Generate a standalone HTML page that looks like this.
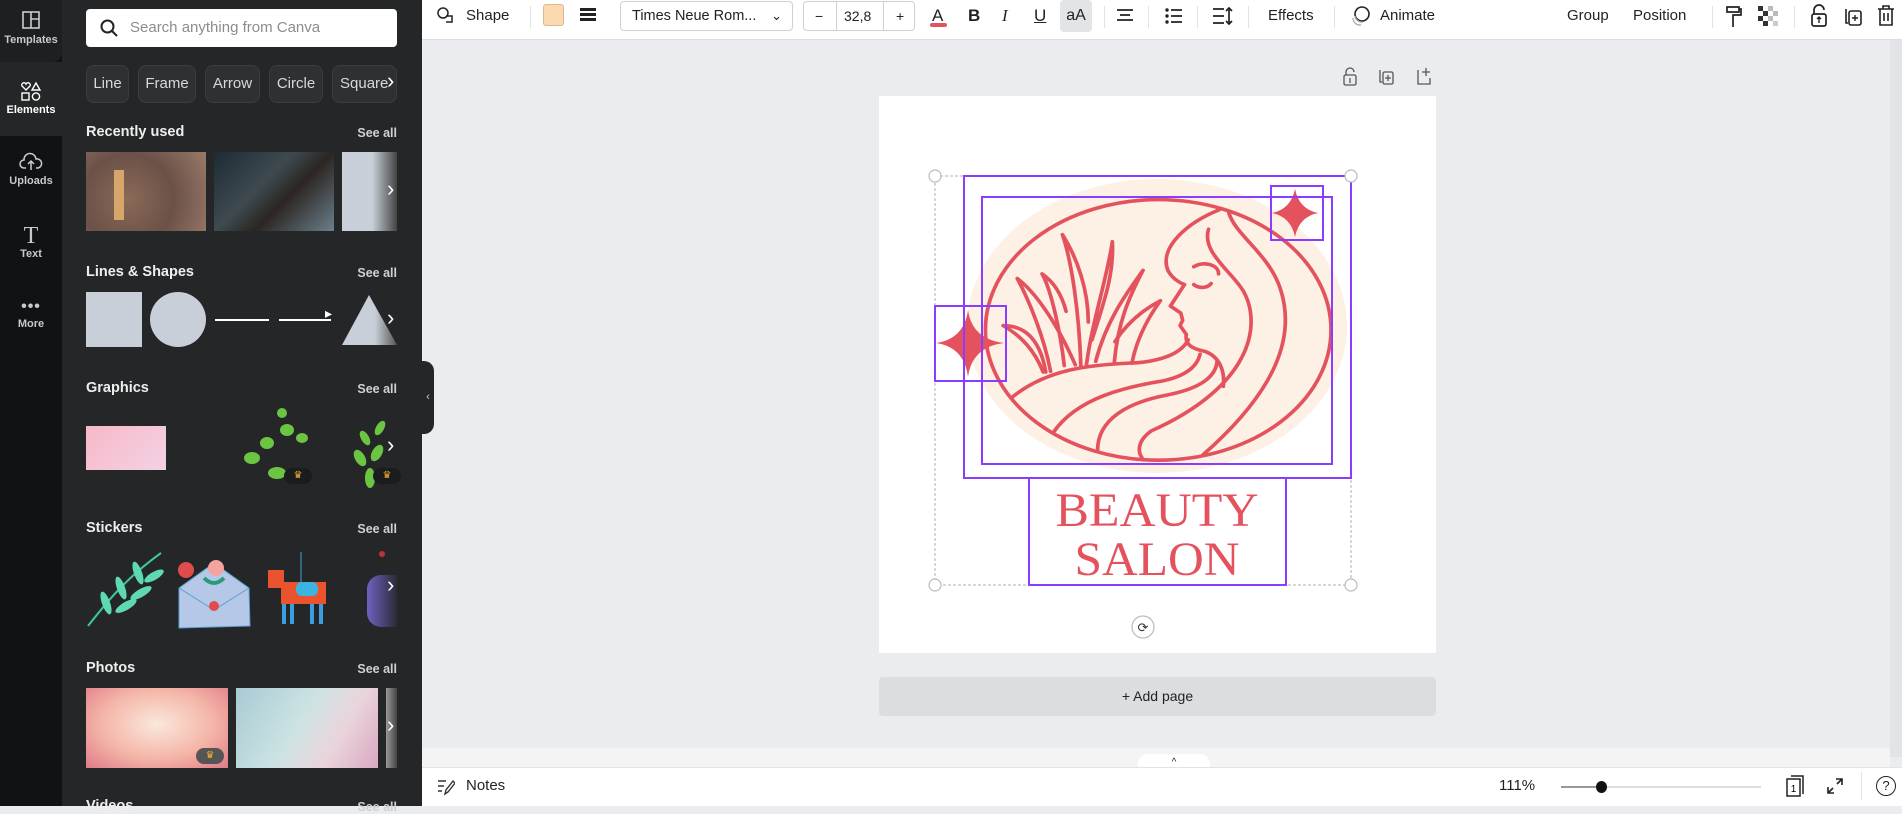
<!DOCTYPE html>
<html><head><meta charset="utf-8"><style>
*{margin:0;padding:0;box-sizing:border-box}
body{width:1902px;height:806px;overflow:hidden;background:#ebecf0;font-family:"Liberation Sans",sans-serif;position:relative}
.a{position:absolute}
.rail{left:0;top:0;width:62px;height:806px;background:#111213}
.ri{position:absolute;left:0;width:62px;text-align:center;color:#c8c9cc;font-size:11px;font-weight:bold}
.panel{left:62px;top:0;width:360px;height:806px;background:#252627}
.h{position:absolute;color:#eee;font-size:14.5px;font-weight:bold}
.sa{position:absolute;right:25px;color:#cfd0d2;font-size:12.5px;font-weight:bold}
.chip{position:absolute;top:65px;height:38px;border:1px solid #3b3c3e;background:#2f3032;border-radius:8px;color:#d8d9db;font-size:15px;line-height:36px;text-align:center}
.arr{position:absolute;color:#fff;font-size:22px;font-weight:300}
.tb{left:422px;top:0;width:1480px;height:40px;background:#fff;border-bottom:1px solid #dcdde0}
.t{position:absolute;top:0;line-height:31px;font-size:15px;color:#222}
.sep{position:absolute;top:6px;width:1px;height:22px;background:#e2e3e5}
</style></head><body>
<div class="a rail">
 <div class="ri" style="top:0;height:62px;background:#1e1f21;border-radius:0 0 10px 0;padding-top:10px"><svg width="20" height="20" viewBox="0 0 20 20"><rect x="2" y="2" width="16" height="16" fill="none" stroke="#ccc" stroke-width="1.6"/><path d="M10 2v16M10 9h8" stroke="#ccc" stroke-width="1.6"/></svg><div style="margin-top:1px">Templates</div></div>
 <div class="ri" style="top:62px;height:74px;background:#252627;padding-top:19px;color:#fff"><svg width="22" height="20" viewBox="0 0 22 20"><path d="M6 9L2 5a2 2 0 0 1 4-2 2 2 0 0 1 4 2z M12 9l4-7 4 7z" fill="none" stroke="#fff" stroke-width="1.4"/><rect x="2" y="12" width="7" height="7" fill="none" stroke="#fff" stroke-width="1.4"/><circle cx="16" cy="15.5" r="3.6" fill="none" stroke="#fff" stroke-width="1.4"/></svg><div>Elements</div></div>
 <div class="ri" style="top:152px"><svg width="24" height="20" viewBox="0 0 24 20"><path d="M7 16H5a4 4 0 0 1 0-8 6 6 0 0 1 12-1 4 4 0 0 1 2 9h-2M12 18V9M9 12l3-3 3 3" fill="none" stroke="#ccc" stroke-width="1.5"/></svg><div>Uploads</div></div>
 <div class="ri" style="top:224px"><div style="font-family:'Liberation Serif',serif;font-size:24px;font-weight:normal;line-height:24px">T</div><div>Text</div></div>
 <div class="ri" style="top:300px"><div style="font-size:16px;line-height:14px;letter-spacing:1px">•••</div><div style="margin-top:4px">More</div></div>
</div>
<div class="a panel">
 <div class="a" style="left:24px;top:9px;width:311px;height:38px;background:#fff;border-radius:4px;color:#8a8c90;font-size:15px;line-height:38px;padding-left:44px">Search anything from Canva
  <svg class="a" style="left:14px;top:10px" width="18" height="18" viewBox="0 0 18 18"><circle cx="7.5" cy="7.5" r="6" fill="none" stroke="#222" stroke-width="2"/><path d="M12 12l5 5" stroke="#222" stroke-width="2"/></svg></div>
 <div class="chip" style="left:24px;width:43px">Line</div>
 <div class="chip" style="left:76px;width:58px">Frame</div>
 <div class="chip" style="left:143px;width:55px">Arrow</div>
 <div class="chip" style="left:207px;width:54px">Circle</div>
 <div class="chip" style="left:270px;width:65px;text-align:left;padding-left:7px;overflow:hidden">Square</div>
 <div class="arr" style="left:325px;top:68px">›</div>

 <div class="h" style="left:24px;top:124px">Recently used</div><div class="sa" style="top:126px">See all</div>
 <div class="a" style="left:24px;top:152px;width:120px;height:79px;background:radial-gradient(circle at 35% 60%,#8a6a58,#6b5148 50%,#9a7a6a);"></div>
 <div class="a" style="left:52px;top:170px;width:10px;height:50px;background:#d7a66a"></div>
 <div class="a" style="left:152px;top:152px;width:120px;height:79px;background:linear-gradient(135deg,#1d2b33,#3e4a50 40%,#2a2622 60%,#6c7f8c)"></div>
 <div class="a" style="left:280px;top:152px;width:55px;height:79px;background:linear-gradient(90deg,#c8cfd8 55%,#444)"></div>
 <div class="arr" style="left:325px;top:176px">›</div>

 <div class="h" style="left:24px;top:264px">Lines &amp; Shapes</div><div class="sa" style="top:266px">See all</div>
 <div class="a" style="left:24px;top:292px;width:56px;height:55px;background:#c8cfd8"></div>
 <div class="a" style="left:88px;top:292px;width:56px;height:55px;background:#c8cfd8;border-radius:50%"></div>
 <div class="a" style="left:153px;top:319px;width:54px;height:2px;background:#fff"></div>
 <div class="a" style="left:217px;top:319px;width:52px;height:2px;background:#fff"></div>
 <div class="arr" style="left:263px;top:305px;font-size:14px">▸</div>
 <svg class="a" style="left:280px;top:295px" width="55" height="50"><defs><linearGradient id="tg"><stop offset=".6" stop-color="#c8cfd8"/><stop offset="1" stop-color="#555"/></linearGradient></defs><path d="M27 0L55 50H0z" fill="url(#tg)"/></svg>
 <div class="arr" style="left:325px;top:305px">›</div>

 <div class="h" style="left:24px;top:380px">Graphics</div><div class="sa" style="top:382px">See all</div>
 <div class="a" style="left:24px;top:426px;width:80px;height:44px;background:linear-gradient(135deg,#f7b8c6,#f3d2e6)"></div>
 <svg class="a" style="left:180px;top:408px" width="70" height="80"><g fill="#6cc443"><ellipse cx="10" cy="50" rx="8" ry="6"/><ellipse cx="25" cy="35" rx="7" ry="6"/><ellipse cx="45" cy="22" rx="7" ry="6"/><ellipse cx="40" cy="5" rx="5" ry="5"/><ellipse cx="60" cy="30" rx="6" ry="5"/><ellipse cx="35" cy="65" rx="9" ry="6"/></g></svg>
 <div class="a" style="left:222px;top:468px;width:28px;height:16px;border-radius:8px;background:#1b1c1e;color:#f2b233;font-size:10px;text-align:center;line-height:16px">♛</div>
 <svg class="a" style="left:283px;top:408px" width="50" height="80"><g fill="#6cc443"><ellipse cx="25" cy="70" rx="5" ry="10"/><ellipse cx="15" cy="50" rx="5" ry="9" transform="rotate(-30 15 50)"/><ellipse cx="32" cy="45" rx="5" ry="9" transform="rotate(30 32 45)"/><ellipse cx="20" cy="30" rx="4" ry="8" transform="rotate(-30 20 30)"/><ellipse cx="35" cy="20" rx="4" ry="8" transform="rotate(30 35 20)"/></g></svg>
 <div class="a" style="left:311px;top:468px;width:28px;height:16px;border-radius:8px;background:#1b1c1e;color:#f2b233;font-size:10px;text-align:center;line-height:16px">♛</div>
 <div class="arr" style="left:325px;top:432px">›</div>

 <div class="h" style="left:24px;top:520px">Stickers</div><div class="sa" style="top:522px">See all</div>
 <svg class="a" style="left:24px;top:548px" width="80" height="80"><path d="M2 78C20 55 40 30 75 5" stroke="#3ac7a0" stroke-width="2" fill="none"/><g fill="#5fd9b4"><ellipse cx="20" cy="55" rx="4" ry="12" transform="rotate(-20 20 55)"/><ellipse cx="35" cy="40" rx="4" ry="12" transform="rotate(-20 35 40)"/><ellipse cx="52" cy="25" rx="4" ry="12" transform="rotate(-20 52 25)"/><ellipse cx="40" cy="58" rx="4" ry="12" transform="rotate(60 40 58)"/><ellipse cx="55" cy="45" rx="4" ry="12" transform="rotate(60 55 45)"/><ellipse cx="68" cy="28" rx="4" ry="11" transform="rotate(60 68 28)"/></g></svg>
 <svg class="a" style="left:112px;top:548px" width="80" height="82"><path d="M5 40L40 15 75 40 76 78 5 80z" fill="#b6c8e8" stroke="#5a9ed0"/><path d="M5 40L40 62 75 40" fill="none" stroke="#5a9ed0"/><circle cx="12" cy="22" r="8" fill="#e24b4b"/><circle cx="42" cy="20" r="8" fill="#f4a3a0"/><path d="M30 30q10 10 20 0" stroke="#2a9a7a" stroke-width="4" fill="none"/><circle cx="40" cy="58" r="5" fill="#e24b4b"/></svg>
 <svg class="a" style="left:204px;top:552px" width="70" height="75"><path d="M35 0v30" stroke="#3aa8d8"/><rect x="15" y="30" width="45" height="22" fill="#e9542e"/><rect x="2" y="18" width="16" height="18" fill="#e9542e"/><rect x="30" y="30" width="22" height="14" rx="6" fill="#3ab4e0"/><path d="M18 52v20M26 52v20M46 52v20M55 52v20" stroke="#3a9fe0" stroke-width="4"/></svg>
 <div class="a" style="left:305px;top:575px;width:30px;height:52px;background:linear-gradient(90deg,#6e62c0,#2a2a38);border-radius:14px 0 0 14px"></div>
 <div class="a" style="left:317px;top:551px;width:6px;height:6px;background:#b33;border-radius:50%"></div>
 <div class="arr" style="left:325px;top:572px">›</div>

 <div class="h" style="left:24px;top:660px">Photos</div><div class="sa" style="top:662px">See all</div>
 <div class="a" style="left:24px;top:688px;width:142px;height:80px;background:radial-gradient(ellipse at 50% 45%,#fae8dc,#f4b6a8 55%,#e07a88)"></div>
 <div class="a" style="left:134px;top:748px;width:28px;height:16px;border-radius:8px;background:#555;color:#f2b233;font-size:10px;text-align:center;line-height:16px">♛</div>
 <div class="a" style="left:174px;top:688px;width:142px;height:80px;background:linear-gradient(120deg,#a8cbd4,#cde3e3 45%,#ead4dc 70%,#d8a8c0)"></div>
 <div class="a" style="left:324px;top:688px;width:11px;height:80px;background:linear-gradient(90deg,#999,#444)"></div>
 <div class="arr" style="left:325px;top:712px">›</div>
 <div class="h" style="left:24px;top:798px">Videos</div><div class="sa" style="top:800px">See all</div>
</div>
<div class="a" style="left:422px;top:361px;width:12px;height:73px;background:#252627;border-radius:0 10px 10px 0;color:#ccc;font-size:11px;line-height:73px;text-align:center">‹</div>

<div class="a tb">
 <svg class="a" style="left:15px;top:7px" width="18" height="18" viewBox="0 0 18 18"><circle cx="6" cy="6" r="5" fill="none" stroke="#222" stroke-width="1.5"/><path d="M9 9h6v6H9" fill="none" stroke="#222" stroke-width="1.5"/></svg>
 <div class="t" style="left:44px">Shape</div>
 <div class="sep" style="left:108px"></div>
 <div class="a" style="left:121px;top:4px;width:21px;height:22px;background:#fcd9ae;border:1px solid #d8b890;border-radius:3px"></div>
 <div class="a" style="left:158px;top:8px;width:16px;height:3px;background:#222;box-shadow:0 5px 0 #222,0 10px 0 #222"></div>
 <div class="a" style="left:198px;top:1px;width:173px;height:30px;border:1px solid #cfd0d3;border-radius:4px;font-size:14.5px;line-height:28px;padding-left:11px;color:#222">Times Neue Rom...<span class="a" style="right:10px;top:0;font-size:13px">⌄</span></div>
 <div class="a" style="left:381px;top:1px;width:112px;height:30px;border:1px solid #cfd0d3;border-radius:4px;font-size:14px;line-height:28px;color:#222">
  <span class="a" style="left:11px">−</span><div class="a" style="left:32px;top:0;width:1px;height:28px;background:#cfd0d3"></div><span class="a" style="left:40px">32,8</span><div class="a" style="left:79px;top:0;width:1px;height:28px;background:#cfd0d3"></div><span class="a" style="left:92px">+</span></div>
 <div class="t" style="left:510px;font-size:17px">A</div><div class="a" style="left:508px;top:23px;width:17px;height:4px;background:#e4525e;border-radius:2px"></div>
 <div class="t" style="left:546px;font-weight:bold;font-size:17px">B</div>
 <div class="t" style="left:580px;font-style:italic;font-size:17px;font-family:'Liberation Serif',serif">I</div>
 <div class="t" style="left:612px;text-decoration:underline;font-size:17px">U</div>
 <div class="a" style="left:638px;top:0;width:32px;height:32px;background:#e3e4e7;border-radius:4px;font-size:16px;line-height:32px;text-align:center;color:#222">aA</div>
 <div class="sep" style="left:682px"></div>
 <svg class="a" style="left:694px;top:8px" width="18" height="16"><path d="M1 2h16M4 7h10M1 12h16" stroke="#222" stroke-width="1.8"/></svg>
 <div class="sep" style="left:726px"></div>
 <svg class="a" style="left:743px;top:7px" width="18" height="18"><g fill="#222"><circle cx="2" cy="3" r="1.7"/><circle cx="2" cy="9" r="1.7"/><circle cx="2" cy="15" r="1.7"/></g><path d="M6 3h11M6 9h11M6 15h11" stroke="#222" stroke-width="1.8"/></svg>
 <div class="sep" style="left:775px"></div>
 <svg class="a" style="left:790px;top:6px" width="22" height="20"><path d="M1 3h11M1 10h11M1 17h11M17 2v16M14 5l3-3 3 3M14 15l3 3 3-3" stroke="#222" stroke-width="1.7" fill="none"/></svg>
 <div class="sep" style="left:826px"></div>
 <div class="t" style="left:846px">Effects</div>
 <div class="sep" style="left:912px"></div>
 <svg class="a" style="left:928px;top:5px" width="22" height="22"><circle cx="12" cy="9" r="7" fill="none" stroke="#222" stroke-width="1.6"/><path d="M5 11a7 7 0 0 0 8 6M3 13a7 7 0 0 0 8 7" stroke="#aaa" stroke-width="1.3" fill="none"/></svg>
 <div class="t" style="left:958px">Animate</div>
 <div class="t" style="left:1145px">Group</div>
 <div class="t" style="left:1211px">Position</div>
 <div class="sep" style="left:1290px"></div>
 <svg class="a" style="left:1303px;top:5px" width="18" height="24"><path d="M2 2h12v5H2zM14 4h2v6H8v4M8 14v8" fill="none" stroke="#222" stroke-width="1.7"/></svg>
 <svg class="a" style="left:1336px;top:6px" width="20" height="20"><g fill="#333"><rect x="0" y="0" width="5" height="5"/><rect x="10" y="0" width="5" height="5" fill="#bbb"/><rect x="5" y="5" width="5" height="5"/><rect x="15" y="5" width="5" height="5" fill="#bbb"/><rect x="0" y="10" width="5" height="5"/><rect x="10" y="10" width="5" height="5" fill="#bbb"/><rect x="5" y="15" width="5" height="5"/><rect x="15" y="15" width="5" height="5" fill="#ccc"/></g></svg>
 <div class="sep" style="left:1372px"></div>
 <svg class="a" style="left:1388px;top:4px" width="18" height="24"><path d="M4 10V6a5 5 0 0 1 10 0" fill="none" stroke="#222" stroke-width="1.7"/><rect x="2" y="10" width="14" height="12" rx="2" fill="none" stroke="#222" stroke-width="1.7"/><path d="M9 13v6M7 15l2-2 2 2" stroke="#222" stroke-width="1.4" fill="none"/></svg>
 <svg class="a" style="left:1421px;top:5px" width="20" height="22"><path d="M3 4v14h2" fill="none" stroke="#222" stroke-width="1.6"/><rect x="6" y="6" width="12" height="14" rx="2" fill="none" stroke="#222" stroke-width="1.6"/><path d="M12 10v6M9 13h6" stroke="#222" stroke-width="1.4"/></svg>
 <svg class="a" style="left:1455px;top:4px" width="18" height="24"><path d="M1 5h16M6 5V2h6v3M3 5v16h12V5M7 9v8M11 9v8" fill="none" stroke="#222" stroke-width="1.6"/></svg>
</div>

<div class="a" style="left:1890px;top:40px;width:12px;height:717px;background:#e3e4e7"></div>

<svg class="a" style="left:1320px;top:66px" width="120" height="22"><g fill="none" stroke="#555" stroke-width="1.3"><path d="M26 9V6a4 4 0 0 1 8 0"/><rect x="24" y="9" width="12" height="10" rx="1.5"/><path d="M30 12v5"/><path d="M60 4v12h2"/><rect x="63" y="6" width="10" height="12" rx="1.5"/><path d="M68 9v6M65 12h6"/><path d="M98 4v14h12v-6M106 2v8M102 6h8"/></g></svg>

<div class="a" style="left:879px;top:96px;width:557px;height:557px;background:#fff"></div>

<svg class="a" style="left:0;top:0" width="1902" height="806">
 <ellipse cx="1157" cy="326" rx="190" ry="147" fill="#fdf0e4"/>
 <g transform="translate(870 90) scale(0.37 0.357)" fill="none" stroke="#e4525e" stroke-width="10" stroke-linecap="round" stroke-linejoin="round">
  <ellipse cx="779" cy="672" rx="467" ry="365"/>
  <path d="M945,335 C860,370 780,440 805,505 C820,535 850,545 850,545 L812,605 L840,625 L845,645 L838,660 L855,685 C850,712 870,725 905,732 C940,745 960,780 955,830"/>
  <path d="M970,345 C990,410 1080,460 1110,560 C1150,690 1100,840 900,1022"/>
  <path d="M915,390 C895,455 980,510 1010,565 C1060,660 1030,830 760,955 C720,985 725,1015 735,1030"/>
  <path d="M385,860 C480,780 600,770 700,765 C780,763 840,740 860,700"/>
  <path d="M495,960 C560,860 700,830 790,815 C860,800 885,770 892,740"/>
  <path d="M615,1010 C615,920 700,875 800,855 C900,835 935,800 938,760"/>
  <path d="M875,495 C905,478 942,490 942,515"/>
  <path d="M875,545 C890,557 912,555 922,542"/>
  <path d="M360,660 C420,660 460,700 475,790"/>
  <path d="M360,660 C410,690 445,730 468,790"/>
  <path d="M488,788 C470,690 430,590 398,528 C440,560 500,640 555,770"/>
  <path d="M525,772 C515,680 490,560 465,515 C500,540 520,580 530,620"/>
  <path d="M570,775 C565,620 545,480 520,405 C560,470 590,560 590,650"/>
  <path d="M585,770 C600,650 640,530 655,425 C660,520 630,600 600,700"/>
  <path d="M660,765 C670,650 700,580 738,505 C700,560 640,640 610,760"/>
  <path d="M708,765 C720,700 750,640 785,590 C730,620 690,660 662,705"/>
 </g>
 <g fill="#e4525e">
  <path d="M1295,189 Q1299,209 1318,213 Q1299,217 1295,237 Q1291,217 1272,213 Q1291,209 1295,189z"/>
  <path d="M968,310 Q972,339 1004,343 Q972,347 968,377 Q964,347 936,343 Q964,339 968,310z"/>
 </g>
 <g fill="none" stroke="#c8cacd" stroke-width="1.5" stroke-dasharray="3 2">
  <rect x="935" y="176" width="416" height="409"/>
 </g>
 <g fill="none" stroke="#8b3dff" stroke-width="2">
  <rect x="964" y="176" width="387" height="302"/>
  <rect x="982" y="197" width="350" height="267"/>
  <rect x="1271" y="186" width="52" height="54"/>
  <rect x="935" y="306" width="71" height="75"/>
  <rect x="1029" y="478" width="257" height="107"/>
 </g>
 <g fill="#fff" stroke="#b8babd" stroke-width="1.2">
  <circle cx="935" cy="176" r="6"/><circle cx="1351" cy="176" r="6"/><circle cx="935" cy="585" r="6"/><circle cx="1351" cy="585" r="6"/>
  <circle cx="1143" cy="627" r="11"/>
 </g>
 <text x="1143" y="632" font-size="13" text-anchor="middle" fill="#333" font-family="DejaVu Sans">⟳</text>
 <g font-family="Liberation Serif,serif" font-size="48" fill="#e4525e" text-anchor="middle">
  <text x="1157" y="526" textLength="203" lengthAdjust="spacingAndGlyphs">BEAUTY</text>
  <text x="1157" y="575" textLength="165" lengthAdjust="spacingAndGlyphs">SALON</text>
 </g>
</svg>

<div class="a" style="left:879px;top:677px;width:557px;height:39px;background:#dcdde1;border-radius:4px;text-align:center;line-height:39px;font-size:14px;color:#222">+ Add page</div>

<div class="a" style="left:422px;top:748px;width:1468px;height:19px;background:#f4f4f5"></div>
<div class="a" style="left:1138px;top:754px;width:72px;height:16px;background:#fff;border-radius:10px 10px 0 0;text-align:center;font-size:10px;color:#222;line-height:18px">^</div>
<div class="a" style="left:422px;top:767px;width:1480px;height:39px;background:#fff;border-top:1px solid #e2e3e5"></div>
<svg class="a" style="left:437px;top:778px" width="18" height="18"><path d="M1 3h8M1 8h6M1 13h4" stroke="#333" stroke-width="1.6"/><path d="M8 16l1-4 7-9 2 2-7 9z" fill="none" stroke="#333" stroke-width="1.4"/></svg>
<div class="a" style="left:466px;top:777px;font-size:15px;color:#222">Notes</div>
<div class="a" style="left:1499px;top:777px;font-size:15px;color:#222">111%</div>
<div class="a" style="left:1561px;top:786px;width:200px;height:2px;background:#ddd"></div>
<div class="a" style="left:1561px;top:786px;width:40px;height:2px;background:#999"></div>
<div class="a" style="left:1596px;top:781px;width:11px;height:12px;background:#111;border-radius:50%"></div>
<svg class="a" style="left:1785px;top:774px" width="22" height="24"><path d="M6 2h12v18" fill="none" stroke="#222" stroke-width="1.5"/><rect x="2" y="5" width="13" height="17" fill="none" stroke="#222" stroke-width="1.5"/><text x="8.5" y="18" font-size="10" text-anchor="middle" font-family="Liberation Sans">1</text></svg>
<svg class="a" style="left:1826px;top:777px" width="18" height="18"><path d="M10 2h6v6M16 2L11 7M8 16H2v-6M2 16l5-5" fill="none" stroke="#222" stroke-width="1.6"/></svg>
<div class="a" style="left:1861px;top:772px;width:1px;height:28px;background:#e2e3e5"></div>
<div class="a" style="left:1876px;top:776px;width:20px;height:20px;border:1.6px solid #222;border-radius:50%;text-align:center;font-size:13px;line-height:17px;color:#222">?</div>
</body></html>
